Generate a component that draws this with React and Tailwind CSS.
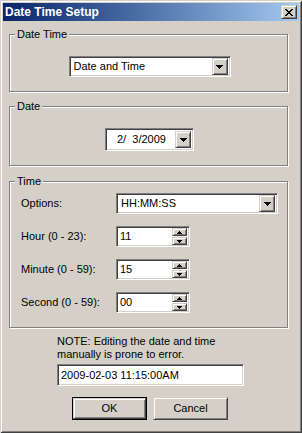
import React from 'react';

const font = { fontFamily: '"Liberation Sans", Arial, sans-serif' };

const sunken = 'border border-t-[#808080] border-l-[#808080] border-b-white border-r-white shadow-[inset_1px_1px_0_#404040,inset_-1px_-1px_0_#d4d0c8] bg-white';
const raised = 'border border-t-[#d4d0c8] border-l-[#d4d0c8] border-b-[#404040] border-r-[#404040] shadow-[inset_1px_1px_0_#fff,inset_-1px_-1px_0_#808080] bg-[#d4d0c8]';

const ArrowDown = ({ w = 7 }) => {
    const rows = [];
    for (let i = 0; i * 2 < w; i++) {
        rows.push(<rect key={i} x={i} y={i} width={w - i * 2} height={1} />);
    }
    return (
        <svg width={w} height={Math.ceil(w / 2)} shapeRendering="crispEdges" fill="#000">{rows}</svg>
    );
};

const ArrowUp = ({ w = 5 }) => {
    const h = Math.ceil(w / 2);
    const rows = [];
    for (let i = 0; i * 2 < w; i++) {
        rows.push(<rect key={i} x={i} y={h - 1 - i} width={w - i * 2} height={1} />);
    }
    return (
        <svg width={w} height={h} shapeRendering="crispEdges" fill="#000">{rows}</svg>
    );
};

const DropButton = () => (
    <div className={`${raised} w-[16px] h-[17px] flex items-center justify-center shrink-0`}>
        <ArrowDown w={7} />
    </div>
);

const ComboBox = ({ value, className = '' }) => (
    <div className={`${sunken} h-[21px] flex items-center p-[2px] ${className}`}>
        <span className="flex-1 pl-[2px] text-[11px] text-black leading-none">{value}</span>
        <DropButton />
    </div>
);

const Spinner = ({ value }) => (
    <div className={`${sunken} w-[74px] h-[21px] flex items-center p-[2px]`}>
        <span className="flex-1 pl-px text-[11px] text-black leading-none">{value}</span>
        <div className="flex flex-col gap-px">
            <div className={`${raised} w-[15px] h-[8px] flex items-center justify-center`}>
                <ArrowUp w={5} />
            </div>
            <div className={`${raised} w-[15px] h-[8px] flex items-center justify-center`}>
                <ArrowDown w={5} />
            </div>
        </div>
    </div>
);

const GroupBox = ({ title, className = '', children }) => (
    <div className={`relative ml-[6px] w-[279px] border border-[#808080] shadow-[inset_1px_1px_0_#fff,1px_1px_0_#fff] ${className}`}>
        <span className="absolute -top-[7px] left-[5px] px-[2px] bg-[#d4d0c8] text-[11px] leading-[13px] text-black">{title}</span>
        {children}
    </div>
);

const Row = ({ label, children }) => (
    <div className="flex items-center h-[21px]">
        <span className="w-[95px] text-[11px] text-black">{label}</span>
        {children}
    </div>
);

const Button = ({ label, isDefault }) => (
    <div className={`w-[75px] h-[23px] ${isDefault ? 'border border-black' : ''}`}>
        <div className={`${raised} h-full flex items-center justify-center text-[11px] text-black`}>{label}</div>
    </div>
);

const App = () => {
    return (
        <div style={font} className="w-[302px] h-[433px] bg-[#d4d0c8] p-[3px] shadow-[inset_1px_1px_0_#d4d0c8,inset_-1px_-1px_0_#404040,inset_2px_2px_0_#fff,inset_-2px_-2px_0_#808080] flex flex-col select-none">
            {/* title bar */}
            <div className="h-[18px] flex items-center bg-gradient-to-r from-[#0a246a] to-[#a6caf0] pl-[2px] pr-[2px]">
                <span className="flex-1 text-white font-bold text-[12px] leading-none">Date Time Setup</span>
                <div className={`${raised} w-[16px] h-[14px] flex items-center justify-center`}>
                    <svg width="8" height="7" shapeRendering="crispEdges" fill="#000">
                        <rect x="0" y="0" width="2" height="1" /><rect x="6" y="0" width="2" height="1" />
                        <rect x="1" y="1" width="2" height="1" /><rect x="5" y="1" width="2" height="1" />
                        <rect x="2" y="2" width="4" height="1" />
                        <rect x="3" y="3" width="2" height="1" />
                        <rect x="2" y="4" width="4" height="1" />
                        <rect x="1" y="5" width="2" height="1" /><rect x="5" y="5" width="2" height="1" />
                        <rect x="0" y="6" width="2" height="1" /><rect x="6" y="6" width="2" height="1" />
                    </svg>
                </div>
            </div>

            <GroupBox title="Date Time" className="mt-[13px] h-[58px] flex justify-center pt-[21px]">
                <ComboBox value="Date and Time" className="w-[162px] ml-[2px]" />
            </GroupBox>

            <GroupBox title="Date" className="mt-[14px] h-[60px] flex justify-center pt-[21px]">
                <div className={`${sunken} w-[89px] h-[23px] flex items-center p-[2px] ml-[2px]`}>
                    <span className="flex-1 pl-[9px] text-[11px] text-black leading-none whitespace-pre">2/  3/2009</span>
                    <DropButton />
                </div>
            </GroupBox>

            <GroupBox title="Time" className="mt-[15px] h-[147px] pt-[11px] pl-[11px] flex flex-col gap-[12px]">
                <Row label="Options:">
                    <ComboBox value="HH:MM:SS" className="w-[162px]" />
                </Row>
                <Row label="Hour (0 - 23):">
                    <Spinner value="11" />
                </Row>
                <Row label="Minute (0 - 59):">
                    <Spinner value="15" />
                </Row>
                <Row label="Second (0 - 59):">
                    <Spinner value="00" />
                </Row>
            </GroupBox>

            <div className="ml-[54px] mt-[7px] text-[11px] leading-[13px] text-black">
                <p>NOTE: Editing the date and time</p>
                <p>manually is prone to error.</p>
            </div>
            <div className={`${sunken} ml-[54px] mt-[3px] w-[187px] h-[22px] flex items-center px-[3px] text-[11px] text-black`}>
                2009-02-03 11:15:00AM
            </div>

            <div className="ml-[69px] mt-[11px] flex gap-[6px]">
                <Button label="OK" isDefault />
                <Button label="Cancel" />
            </div>
        </div>
    );
};

export default App;
